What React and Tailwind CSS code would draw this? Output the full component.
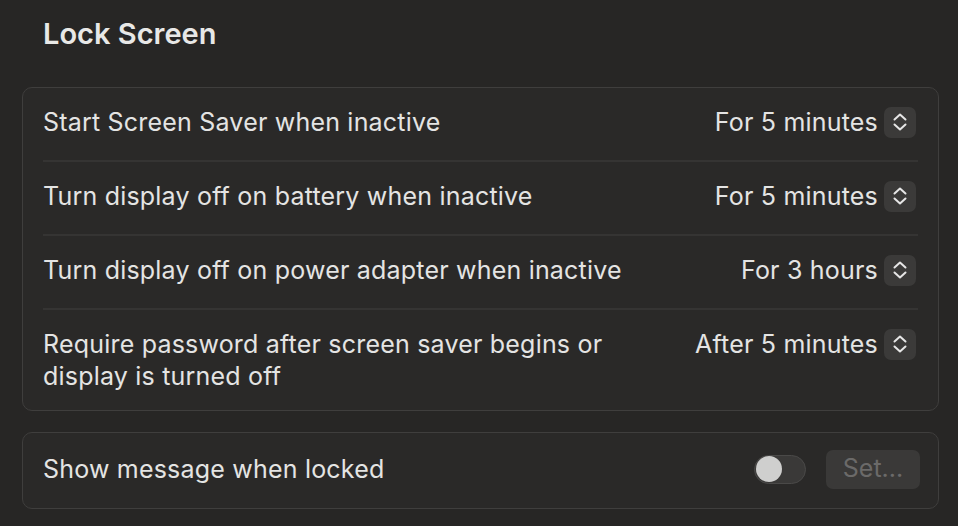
import React from "react";

const rows = [
  { label: "Start Screen Saver when inactive", value: "For 5 minutes" },
  { label: "Turn display off on battery when inactive", value: "For 5 minutes" },
  { label: "Turn display off on power adapter when inactive", value: "For 3 hours" },
  {
    label: "Require password after screen saver begins or display is turned off",
    value: "After 5 minutes",
  },
];

function Stepper() {
  return (
    <div className="flex h-[31px] w-[32px] items-center justify-center rounded-[7px] bg-[#3b3a39]">
      <svg width="18" height="24" viewBox="0 0 18 24" fill="none">
        <path d="M3.5 9.5 L9 4.5 L14.5 9.5" stroke="#e6e6e6" strokeWidth="2" strokeLinecap="round" strokeLinejoin="round" />
        <path d="M3.5 14.5 L9 19.5 L14.5 14.5" stroke="#e6e6e6" strokeWidth="2" strokeLinecap="round" strokeLinejoin="round" />
      </svg>
    </div>
  );
}

export default function App() {
  return (
    <div
      className="h-[526px] w-[958px] overflow-hidden bg-[#272625] pl-[22px] pr-[19px] text-[#e4e4e3]"
      style={{ fontFamily: "Inter, 'Noto Sans', sans-serif" }}
    >
      <h1 className="pl-[21px] pt-[15px] text-[29px] font-semibold leading-[38px] text-[#e8e8e7]">
        Lock Screen
      </h1>

      <div className="mt-[34px] rounded-[10px] border border-[#3f3e3d] bg-[#2a2928] px-5">
        {rows.map((r, i) => (
          <div
            key={i}
            className={
              "flex items-start justify-between " +
              (i < rows.length - 1 ? "h-[74px] border-b-2 border-[#353433] pt-[18px]" : "h-[100px] pt-[18px]")
            }
          >
            <div className="max-w-[600px] text-[25px] leading-[32px] tracking-[0.2px]">{r.label}</div>
            <div className="mr-[2px] flex items-center gap-[6px]">
              <span className="text-[25px] leading-[32px] tracking-[0.2px]">{r.value}</span>
              <Stepper />
            </div>
          </div>
        ))}
      </div>

      <div className="mt-[21px] flex h-[77px] items-center justify-between rounded-[10px] border border-[#3f3e3d] bg-[#2a2928] pb-[3px] pl-5 pr-[18px]">
        <div className="text-[25px] leading-[32px] tracking-[0.2px]">Show message when locked</div>
        <div className="flex items-center gap-[20px]">
          <div className="flex h-[29px] w-[52px] items-center rounded-full border border-[#4a4948] bg-[#3a3938] px-[1px]">
            <div className="h-[26px] w-[26px] rounded-full bg-[#cfcfce]" />
          </div>
          <div className="flex h-[39px] w-[94px] items-center justify-center rounded-[7px] bg-[#3a3938] text-[25px] text-[#6b6a69]">
            Set...
          </div>
        </div>
      </div>
    </div>
  );
}
